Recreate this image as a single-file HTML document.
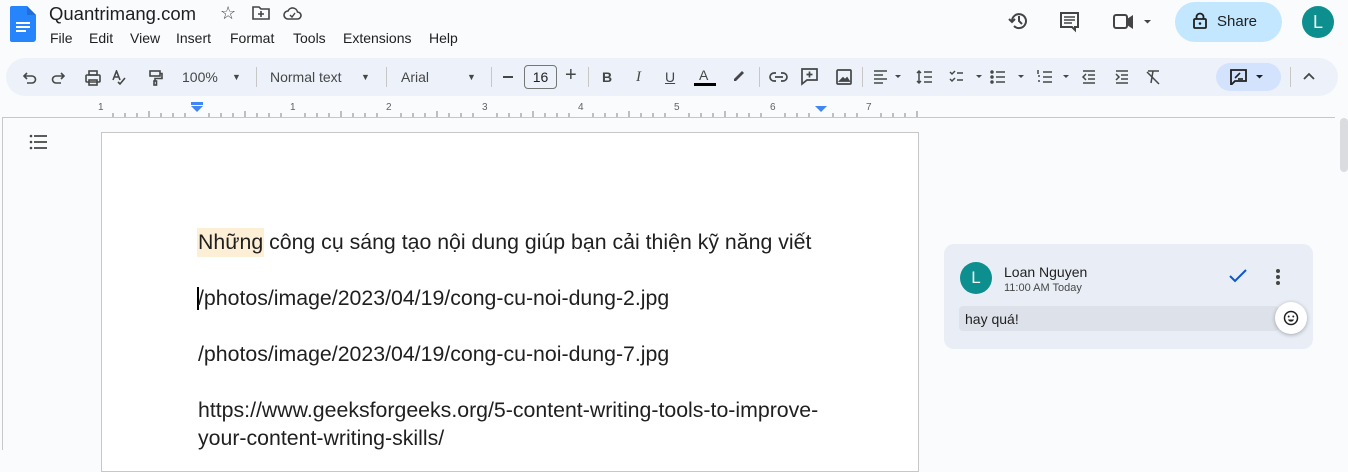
<!DOCTYPE html>
<html><head><meta charset="utf-8"><style>
*{margin:0;padding:0;box-sizing:border-box}
body{width:1348px;height:450px;overflow:hidden;background:#f9fbfd;font-family:"Liberation Sans",Arial,sans-serif;color:#1f1f1f;position:relative}
.a{position:absolute}
.menu span{position:absolute;font-size:14px;white-space:nowrap}
.tb{left:6px;top:58px;width:1332px;height:38px;background:#edf2fa;border-radius:19px}
.sep{position:absolute;top:67px;width:1px;height:20px;background:#c7c7c7}
.t{font-size:14px;color:#444746;top:69px}
.doc{font-size:21.3px;color:#1f1f1f;line-height:28px;left:198px;white-space:nowrap}
</style></head><body>
<svg class="a" style="left:10px;top:6px" width="26" height="36" viewBox="0 0 26 36"><path d="M2 0h15l9 9v24a3 3 0 0 1-3 3H2a2 2 0 0 1-2-2V2a2 2 0 0 1 2-2z" fill="#2684fc"/><path d="M17 0v9h9z" fill="#1f6fd6"/><rect x="6" y="16" width="14" height="2" fill="#fff"/><rect x="6" y="20" width="14" height="2" fill="#fff"/><rect x="6" y="24" width="10" height="2" fill="#fff"/></svg>
<div class="a" style="left:49px;top:3px;font-size:18.5px;color:#1f1f1f">Quantrimang.com</div>
<div class="a" style="left:220px;top:3px;font-size:18px;color:#444">☆</div>
<svg class="a" style="left:252px;top:6px" width="18" height="14" viewBox="0 0 18 14"><path d="M1 1h6l2 2h8v10H1z" fill="none" stroke="#444" stroke-width="1.6"/><path d="M9 5v6M6 8h6" stroke="#444" stroke-width="1.6"/></svg>
<svg class="a" style="left:283px;top:6px" width="19" height="14" viewBox="0 0 19 14"><path d="M5 13a4 4 0 0 1 0-8 5 5 0 0 1 9.5 1 3.5 3.5 0 0 1 0 7z" fill="none" stroke="#444" stroke-width="1.6"/><path d="M7 9l2 2 3-4" fill="none" stroke="#444" stroke-width="1.4"/></svg>
<div class="a menu" style="left:0;top:30px">
<span style="left:50px">File</span><span style="left:89px">Edit</span><span style="left:130px">View</span><span style="left:176px">Insert</span><span style="left:230px">Format</span><span style="left:293px">Tools</span><span style="left:343px">Extensions</span><span style="left:429px">Help</span></div>
<svg class="a" style="left:1008px;top:10px" width="22" height="22" viewBox="0 0 22 22"><path d="M4 11a7 7 0 1 1 2 5" fill="none" stroke="#444" stroke-width="2"/><path d="M1 9l3 3 3-3" fill="none" stroke="#444" stroke-width="2"/><path d="M11 6v5l3 3" fill="none" stroke="#444" stroke-width="2"/></svg>
<svg class="a" style="left:1059px;top:11px" width="22" height="22" viewBox="0 0 22 22"><path d="M2 2h17v14h-3v3l-3-3H2z" fill="none" stroke="#444" stroke-width="2"/><path d="M5 6h11M5 9h11M5 12h8" stroke="#444" stroke-width="1.6"/></svg>
<svg class="a" style="left:1113px;top:14px" width="40" height="16" viewBox="0 0 40 16"><rect x="1" y="1" width="13" height="13" rx="2" fill="none" stroke="#444" stroke-width="2"/><path d="M14 5l6-4v14l-6-4z" fill="#444"/><path d="M31 6h7l-3.5 3.5z" fill="#444"/></svg>
<div class="a" style="left:1175px;top:2px;width:107px;height:40px;border-radius:20px;background:#c2e7ff"></div>
<svg class="a" style="left:1193px;top:12px" width="14" height="17" viewBox="0 0 14 17"><rect x="1" y="7" width="12" height="9" rx="1" fill="none" stroke="#1f1f1f" stroke-width="1.8"/><path d="M3.5 7V5a3.5 3.5 0 0 1 7 0v2" fill="none" stroke="#1f1f1f" stroke-width="1.8"/><circle cx="7" cy="11.5" r="1.3" fill="#1f1f1f"/></svg>
<div class="a" style="left:1217px;top:13px;font-size:15px">Share</div>
<div class="a" style="left:1302px;top:6px;width:32px;height:32px;border-radius:50%;background:#0d8f8f;color:#fff;font-size:18px;text-align:center;line-height:32px">L</div>
<div class="a tb"></div>
<svg class="a" style="left:22px;top:70px" width="230" height="16" viewBox="0 0 230 16" fill="none" stroke="#444746" stroke-width="1.6">
<path d="M3 6h7a3.5 3.5 0 0 1 0 7H5M5 3L2 6l3 3"/>
<path d="M41 6h-7a3.5 3.5 0 0 0 0 7h5M39 3l3 3-3 3"/>
<rect x="64" y="5" width="14" height="7" rx="1"/><rect x="67" y="1" width="8" height="4"/><rect x="67" y="10" width="8" height="5"/>
<path d="M91 10l3.5-9 3.5 9M92.5 7h4M96 12l2 2 5-6"/>
<rect x="128" y="1" width="10" height="5"/><path d="M138 3.5h2v5h-7v3"/><rect x="132" y="11" width="2.5" height="4"/>
</svg>
<div class="a t" style="left:182px;font-size:14px">100%</div>
<div class="a t" style="left:232px;font-size:9px;top:72px">▼</div>
<div class="sep" style="left:256px"></div>
<div class="a t" style="left:270px">Normal text</div>
<div class="a t" style="left:361px;font-size:9px;top:72px">▼</div>
<div class="sep" style="left:386px"></div>
<div class="a t" style="left:401px">Arial</div>
<div class="a t" style="left:467px;font-size:9px;top:72px">▼</div>
<div class="sep" style="left:491px"></div>
<div class="a" style="left:503px;top:76px;width:10px;height:2px;background:#444746"></div>
<div class="a" style="left:524px;top:65px;width:33px;height:24px;border:1px solid #747775;border-radius:4px;font-size:14px;text-align:center;line-height:22px">16</div>
<div class="a t" style="left:565px;top:64px;font-size:20px">+</div>
<div class="sep" style="left:588px"></div>
<div class="a t" style="left:602px;font-weight:bold">B</div>
<div class="a t" style="left:636px;font-style:italic;font-family:'Liberation Serif',serif;font-size:15px">I</div>
<div class="a t" style="left:665px;text-decoration:underline">U</div>
<div class="a t" style="left:699px;top:67px">A</div>
<div class="a" style="left:694px;top:83px;width:22px;height:3px;background:#000"></div>
<svg class="a" style="left:731px;top:68px" width="16" height="14" viewBox="0 0 16 14"><path d="M3 11l8-8 2 2-8 8H3z" fill="#444746"/></svg>
<div class="sep" style="left:759px"></div>
<svg class="a" style="left:769px;top:68px" width="90" height="18" viewBox="0 0 90 18" fill="none" stroke="#444746" stroke-width="1.7">
<path d="M7 5H5a4 4 0 0 0 0 8h2M12 5h2a4 4 0 0 1 0 8h-2M6 9h8"/>
<path d="M33 1h15v11h-10l-5 4z"/><path d="M40.5 3.5v6M37.5 6.5h6"/>
<rect x="68" y="2" width="14" height="14" rx="1"/><path d="M71 13l3-3 2 2 2-2 2 3z" fill="#444746"/>
</svg>
<div class="sep" style="left:862px"></div>
<svg class="a" style="left:872px;top:69px" width="300" height="16" viewBox="0 0 300 16" fill="none" stroke="#444746" stroke-width="1.5">
<path d="M2 2h13M2 6h9M2 10h13M2 14h9"/><path d="M23 6h6l-3 3z" fill="#444746" stroke="none"/>
<path d="M47 2v12M45 4l2-2 2 2M45 12l2 2 2-2M52 3h8M52 8h8M52 13h8"/>
<path d="M78 3l2 2 3-3M78 10l2 2 3-3M85 4h6M85 11h6"/><path d="M104 6h6l-3 3z" fill="#444746" stroke="none"/>
<circle cx="120" cy="3" r="1" fill="#444746"/><circle cx="120" cy="8" r="1" fill="#444746"/><circle cx="120" cy="13" r="1" fill="#444746"/><path d="M124 3h9M124 8h9M124 13h9"/><path d="M146 6h6l-3 3z" fill="#444746" stroke="none"/>
<path d="M171 3h9M171 8h9M171 13h9M166 1v4M166 7h2M166 12h2"/><path d="M191 6h6l-3 3z" fill="#444746" stroke="none"/>
<path d="M211 2h12M216 6h7M216 10h7M211 14h12M214 5l-3 3 3 3"/>
<path d="M244 2h12M249 6h7M249 10h7M244 14h12M244 5l3 3-3 3"/>
<path d="M276 2h11M281 2l-2 12M275 3l12 12"/>
</svg>
<div class="a" style="left:1216px;top:63px;width:65px;height:28px;border-radius:14px;background:#d3e3fd"></div>
<svg class="a" style="left:1230px;top:69px" width="40" height="16" viewBox="0 0 40 16"><path d="M1 1h15v11H5l-4 4z" fill="none" stroke="#1f1f1f" stroke-width="1.8"/><path d="M5 9l5-5" stroke="#1f1f1f" stroke-width="1.6"/><path d="M8 10h5" stroke="#1f1f1f" stroke-width="1.6"/><path d="M26 6h7l-3.5 3.5z" fill="#1f1f1f"/></svg>
<div class="sep" style="left:1290px"></div>
<svg class="a" style="left:1303px;top:72px" width="12" height="8" viewBox="0 0 12 8"><path d="M1 7l5-5 5 5" fill="none" stroke="#444746" stroke-width="1.8"/></svg>
<svg class="a" style="left:0;top:98px" width="1348" height="22" viewBox="0 0 1348 22">
<line x1="3" y1="19.5" x2="1335" y2="19.5" stroke="#c7c7c7"/>
<g font-size="10" fill="#5f6368" font-family="Liberation Sans">
<text x="98" y="12">1</text><text x="290" y="12">1</text><text x="386" y="12">2</text><text x="482" y="12">3</text><text x="578" y="12">4</text><text x="674" y="12">5</text><text x="770" y="12">6</text><text x="866" y="12">7</text></g>
<g stroke="#80868b">
<path d="M113 15v4M125 15v4M137 15v4M149 13v6M161 15v4M173 15v4M185 15v4M209 15v4M221 15v4M233 15v4M245 13v6M257 15v4M269 15v4M281 15v4M305 15v4M317 15v4M329 15v4M341 13v6M353 15v4M365 15v4M377 15v4M401 15v4M413 15v4M425 15v4M437 13v6M449 15v4M461 15v4M473 15v4M497 15v4M509 15v4M521 15v4M533 13v6M545 15v4M557 15v4M569 15v4M593 15v4M605 15v4M617 15v4M629 13v6M641 15v4M653 15v4M665 15v4M689 15v4M701 15v4M713 15v4M725 13v6M737 15v4M749 15v4M761 15v4M785 15v4M797 15v4M809 15v4M833 15v4M845 15v4M857 15v4M881 15v4M893 15v4M905 15v4M917 13v6"/></g>
<rect x="191" y="4" width="12" height="3" fill="#4285f4"/><path d="M191 8h12l-6 6z" fill="#4285f4"/>
<path d="M815 8h12l-6 6z" fill="#4285f4"/>
</svg>
<div class="a" style="left:0;top:117px;width:3px;height:333px;border-right:1px solid #c7c7c7"></div>
<svg class="a" style="left:29px;top:134px" width="20" height="16" viewBox="0 0 20 16"><circle cx="2" cy="2" r="1.3" fill="#444746"/><circle cx="2" cy="8" r="1.3" fill="#444746"/><circle cx="2" cy="14" r="1.3" fill="#444746"/><path d="M5 2h13M5 8h13M5 14h13" stroke="#444746" stroke-width="1.8"/></svg>
<div class="a" style="left:101px;top:132px;width:818px;height:340px;background:#fff;border:1px solid #c7c7c7"></div>
<div class="a" style="left:197px;top:228px;width:67px;height:29px;background:#fdefd6"></div>
<div class="a doc" style="top:228px">Những công cụ sáng tạo nội dung giúp bạn cải thiện kỹ năng viết</div>
<div class="a" style="left:197px;top:287px;width:2px;height:23px;background:#000"></div>
<div class="a doc" style="top:284px">/photos/image/2023/04/19/cong-cu-noi-dung-2.jpg</div>
<div class="a doc" style="top:340px">/photos/image/2023/04/19/cong-cu-noi-dung-7.jpg</div>
<div class="a doc" style="top:396px">https://www.geeksforgeeks.org/5-content-writing-tools-to-improve-<br>your-content-writing-skills/</div>
<div class="a" style="left:944px;top:244px;width:369px;height:105px;background:#e9eef6;border-radius:10px"></div>
<div class="a" style="left:960px;top:262px;width:32px;height:32px;border-radius:50%;background:#0d8f8f;color:#fff;font-size:17px;text-align:center;line-height:32px">L</div>
<div class="a" style="left:1004px;top:264px;font-size:14px;color:#1f1f1f">Loan Nguyen</div>
<div class="a" style="left:1004px;top:282px;font-size:11px;color:#444746">11:00 AM Today</div>
<svg class="a" style="left:1229px;top:269px" width="18" height="14" viewBox="0 0 18 14"><path d="M1 7l5 5L17 1" fill="none" stroke="#0b57d0" stroke-width="2"/></svg>
<svg class="a" style="left:1275px;top:268px" width="6" height="18" viewBox="0 0 6 18"><circle cx="3" cy="3" r="2" fill="#444746"/><circle cx="3" cy="9" r="2" fill="#444746"/><circle cx="3" cy="15" r="2" fill="#444746"/></svg>
<div class="a" style="left:959px;top:306px;width:320px;height:25px;background:#dde2ea;border-radius:4px"></div>
<div class="a" style="left:965px;top:311px;font-size:14px;color:#1f1f1f">hay quá!</div>
<div class="a" style="left:1275px;top:302px;width:32px;height:32px;border-radius:50%;background:#fff;box-shadow:0 1px 4px rgba(0,0,0,.3)"></div>
<svg class="a" style="left:1283px;top:310px" width="16" height="16" viewBox="0 0 16 16"><circle cx="8" cy="8" r="6.5" fill="none" stroke="#1f1f1f" stroke-width="1.5"/><circle cx="5.7" cy="6.5" r="1" fill="#1f1f1f"/><circle cx="10.3" cy="6.5" r="1" fill="#1f1f1f"/><path d="M5 9.5a3.2 3.2 0 0 0 6 0z" fill="#1f1f1f"/></svg>
<div class="a" style="left:1340px;top:118px;width:8px;height:54px;background:#dadce0;border-radius:4px"></div>
</body></html>
